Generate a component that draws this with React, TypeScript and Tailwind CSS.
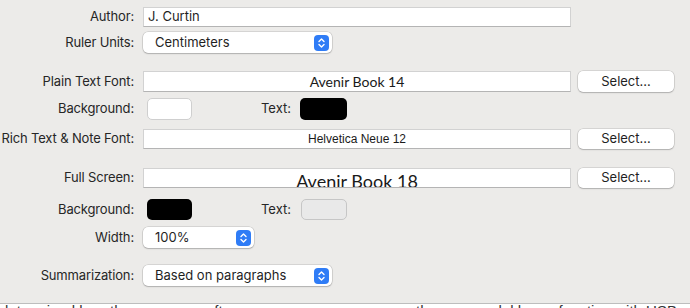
const labelClass = "w-[134px] shrink-0 whitespace-nowrap text-right text-[13px] tracking-[-0.15px] text-[#262626]"
const fieldClass =
    "h-full bg-white border border-[#d2d2d2] border-b-[#b4b4b4] overflow-hidden"
const popupClass =
    "relative flex h-full items-center rounded-[5px] bg-white pl-[12px] text-[13px] text-[#1f1f1f] shadow-[0_0_0_0.5px_rgba(0,0,0,0.18),0_1px_1.5px_rgba(0,0,0,0.18)]"
const buttonClass =
    "flex h-full w-[96px] items-center justify-center rounded-[5px] bg-white text-[13px] text-[#1f1f1f] shadow-[0_0_0_0.5px_rgba(0,0,0,0.18),0_1px_1.5px_rgba(0,0,0,0.18)]"

function Stepper() {
    return (
        <span className="absolute right-[3px] top-1/2 flex h-[16px] w-[15px] -translate-y-1/2 items-center justify-center rounded-[4px] bg-[#2f7cf6]">
            <svg width="9" height="12" viewBox="0 0 9 12" fill="none">
                <path d="M2 4.5 L4.5 2 L7 4.5" stroke="white" strokeWidth="1.4" strokeLinecap="round" strokeLinejoin="round" />
                <path d="M2 7.5 L4.5 10 L7 7.5" stroke="white" strokeWidth="1.4" strokeLinecap="round" strokeLinejoin="round" />
            </svg>
        </span>
    )
}

function Popup({ value, width }: { value: string; width: string }) {
    return (
        <div className={`${popupClass} ${width}`}>
            {value}
            <Stepper />
        </div>
    )
}

export default function App() {
    return (
        <div
            className="flex h-[308px] w-[690px] flex-col bg-[#ecebe9]"
            style={{ fontFamily: "Inter, 'Liberation Sans', sans-serif" }}
        >
            <div className="mt-[7px] flex h-[20px] items-center gap-[9px]">
                <span className={labelClass}>Author:</span>
                <div className={`${fieldClass} flex w-[428px] items-center pl-[4px] text-[13px] text-[#1f1f1f]`}>
                    J. Curtin
                </div>
            </div>

            <div className="mt-[5px] flex h-[21px] items-center gap-[9px]">
                <span className={labelClass}>Ruler Units:</span>
                <Popup value="Centimeters" width="w-[189px]" />
            </div>

            <div className="mt-[18px] flex h-[21px] items-center gap-[9px]">
                <span className={labelClass}>Plain Text Font:</span>
                <div
                    className={`${fieldClass} flex w-[428px] items-center justify-center text-[14px] text-[#1a1a1a]`}
                    style={{ fontFamily: "Lato, sans-serif" }}
                >
                    Avenir Book 14
                </div>
                <button type="button" className={`${buttonClass} ml-[-2px]`}>
                    Select...
                </button>
            </div>

            <div className="mt-[6px] flex h-[22px] items-center gap-[9px]">
                <span className={labelClass}>Background:</span>
                <span className="ml-[4px] h-full w-[45px] rounded-[5px] border border-[#cfcfcf] bg-white" />
                <span className="w-[90px] shrink-0 text-right text-[13px] text-[#262626]">Text:</span>
                <span className="h-full w-[47px] rounded-[5px] bg-black" />
            </div>

            <div className="mt-[9px] flex h-[20px] items-center gap-[9px]">
                <span className={labelClass}>Rich Text &amp; Note Font:</span>
                <div
                    className={`${fieldClass} flex w-[428px] items-center justify-center text-[12px] text-[#1a1a1a]`}
                    style={{ fontFamily: "'Liberation Sans', sans-serif" }}
                >
                    Helvetica Neue 12
                </div>
                <button type="button" className={`${buttonClass} ml-[-2px]`}>
                    Select...
                </button>
            </div>

            <div className="mt-[19px] flex h-[20px] items-center gap-[9px]">
                <span className={labelClass}>Full Screen:</span>
                <div
                    className={`${fieldClass} flex w-[428px] justify-center pt-[1px] text-[18px] leading-[22px] text-[#1a1a1a]`}
                    style={{ fontFamily: "Lato, sans-serif" }}
                >
                    Avenir Book 18
                </div>
                <button type="button" className={`${buttonClass} ml-[-2px]`}>
                    Select...
                </button>
            </div>

            <div className="mt-[11px] flex h-[21px] items-center gap-[9px]">
                <span className={labelClass}>Background:</span>
                <span className="ml-[4px] h-full w-[45px] rounded-[5px] bg-black" />
                <span className="w-[90px] shrink-0 text-right text-[13px] text-[#262626]">Text:</span>
                <span className="ml-[1px] h-full w-[46px] rounded-[5px] border border-[#c6c6c6] bg-[#e9e9e9]" />
            </div>

            <div className="mt-[7px] flex h-[21px] items-center gap-[9px]">
                <span className={labelClass}>Width:</span>
                <Popup value="100%" width="w-[111px]" />
            </div>

            <div className="mt-[17px] flex h-[21px] items-center gap-[9px]">
                <span className={labelClass}>Summarization:</span>
                <Popup value="Based on paragraphs" width="w-[189px]" />
            </div>

            <div className="mt-auto h-[5px] overflow-hidden border-t border-[#bdbdbd] bg-white">
                <div
                    className="flex -translate-y-[1px] gap-[30px] whitespace-nowrap text-[15px] leading-[15px] text-[#333]"
                    style={{ fontFamily: "'Liberation Sans', sans-serif" }}
                >
                    <span>determined less than one year after</span>
                    <span className="ml-[150px]">the new model has a function with USB</span>
                </div>
            </div>
        </div>
    )
}
